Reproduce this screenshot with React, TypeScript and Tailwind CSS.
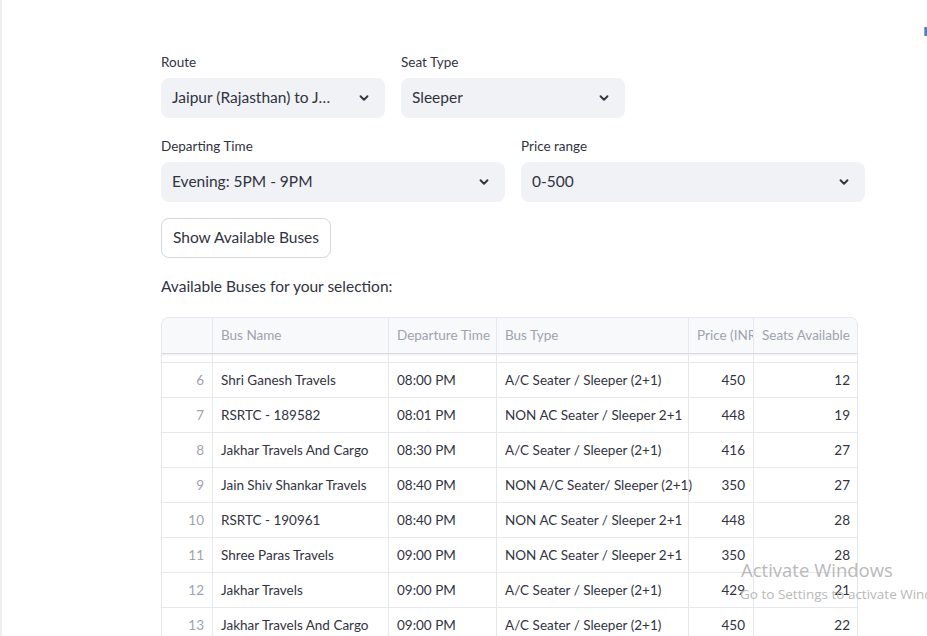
import React from "react";

type Bus = {
  id: number;
  name: string;
  time: string;
  type: string;
  price: number;
  seats: number;
};

const buses: Bus[] = [
  { id: 6, name: "Shri Ganesh Travels", time: "08:00 PM", type: "A/C Seater / Sleeper (2+1)", price: 450, seats: 12 },
  { id: 7, name: "RSRTC - 189582", time: "08:01 PM", type: "NON AC Seater / Sleeper 2+1", price: 448, seats: 19 },
  { id: 8, name: "Jakhar Travels And Cargo", time: "08:30 PM", type: "A/C Seater / Sleeper (2+1)", price: 416, seats: 27 },
  { id: 9, name: "Jain Shiv Shankar Travels", time: "08:40 PM", type: "NON A/C Seater/ Sleeper (2+1)", price: 350, seats: 27 },
  { id: 10, name: "RSRTC - 190961", time: "08:40 PM", type: "NON AC Seater / Sleeper 2+1", price: 448, seats: 28 },
  { id: 11, name: "Shree Paras Travels", time: "09:00 PM", type: "NON AC Seater / Sleeper 2+1", price: 350, seats: 28 },
  { id: 12, name: "Jakhar Travels", time: "09:00 PM", type: "A/C Seater / Sleeper (2+1)", price: 429, seats: 21 },
  { id: 13, name: "Jakhar Travels And Cargo", time: "09:00 PM", type: "A/C Seater / Sleeper (2+1)", price: 450, seats: 22 },
];

const Chevron = () => (
  <svg width="14" height="14" viewBox="0 0 24 24" fill="none" stroke="#31333f" strokeWidth="3.2" strokeLinecap="round" strokeLinejoin="round">
    <path d="M6 9l6 6 6-6" />
  </svg>
);

const Select = ({ label, value }: { label: string; value: string }) => (
  <div className="flex flex-col">
    <label className="text-[13.5px] text-[#31333f] h-5 leading-5 mb-[6px]">{label}</label>
    <div className="h-10 rounded-lg bg-[#f0f2f6] flex items-center justify-between pl-[11px] pr-[14px]">
      <span className="text-[15.5px] text-[#31333f] truncate">{value}</span>
      <Chevron />
    </div>
  </div>
);

const cols = "grid grid-cols-[51px_176px_108px_192px_65px_104px]";
const cell = "border-r border-[#e6e8ee] px-2 flex items-center whitespace-nowrap overflow-hidden";

const App = () => {
  return (
    <div
      className="relative h-[636px] w-[927px] overflow-hidden bg-white border-l-2 border-[#eef0f4]"
      style={{ fontFamily: "Lato, 'Noto Sans', sans-serif" }}
    >
      <div className="absolute right-0 top-[27px] h-[9px] w-[3px] bg-[#3b82f6] border-l border-[#c59a52]" />

      <div className="ml-[159px] w-[704px] pt-[52px]">
        <div className="grid grid-cols-3 gap-4">
          <Select label="Route" value="Jaipur (Rajasthan) to J…" />
          <Select label="Seat Type" value="Sleeper" />
        </div>
        <div className="grid grid-cols-2 gap-4 mt-[18px]">
          <Select label="Departing Time" value="Evening: 5PM - 9PM" />
          <Select label="Price range" value="0-500" />
        </div>

        <button className="mt-4 h-10 w-[170px] rounded-lg border border-[#d5d7de] bg-white text-[15.5px] text-[#31333f]">
          Show Available Buses
        </button>

        <p className="mt-4 text-[15.5px] text-[#31333f] leading-6">Available Buses for your selection:</p>

        <div className="mt-[19px] w-[697px] rounded-t-lg border border-[#e6e8ee] border-b-0 overflow-hidden text-[13.5px]">
          <div className={`${cols} h-9 bg-[#f8f9fb] text-[#9ea3ad] border-b border-[#d7dae0] shadow-[0_1px_2px_rgba(0,0,0,0.08)]`}>
            <div className="border-r border-[#e6e8ee]" />
            <div className={cell}>Bus Name</div>
            <div className={cell}>Departure Time</div>
            <div className={cell}>Bus Type</div>
            <div className={cell}>Price (INR)</div>
            <div className="px-2 flex items-center whitespace-nowrap overflow-hidden">Seats Available</div>
          </div>
          <div className={`${cols} h-[9px] border-b border-[#e6e8ee]`}>
            <div className="border-r border-[#e6e8ee]" />
            <div className="border-r border-[#e6e8ee]" />
            <div className="border-r border-[#e6e8ee]" />
            <div className="border-r border-[#e6e8ee]" />
            <div className="border-r border-[#e6e8ee]" />
            <div />
          </div>
          {buses.map((b) => (
            <div key={b.id} className={`${cols} h-[35px] border-b border-[#e6e8ee] text-[#31333f]`}>
              <div className={`${cell} justify-end text-[#9ea3ad]`}>{b.id}</div>
              <div className={cell}>{b.name}</div>
              <div className={cell}>{b.time}</div>
              <div className="border-r border-[#e6e8ee] px-2 flex items-center whitespace-nowrap">{b.type}</div>
              <div className={`${cell} justify-end`}>{b.price}</div>
              <div className="px-2 flex items-center justify-end">{b.seats}</div>
            </div>
          ))}
        </div>
      </div>

      <div
        className="absolute left-[739px] top-[557px] text-[#b9b9b9] whitespace-nowrap pointer-events-none"
        style={{ fontFamily: "'Open Sans', 'Noto Sans', sans-serif" }}
      >
        <div className="text-[18.5px] leading-[26px]">Activate Windows</div>
        <div className="text-[13.5px] leading-[20px] -ml-[1px] mt-[1px]">Go to Settings to activate Windows.</div>
      </div>
    </div>
  );
};

export default App;
